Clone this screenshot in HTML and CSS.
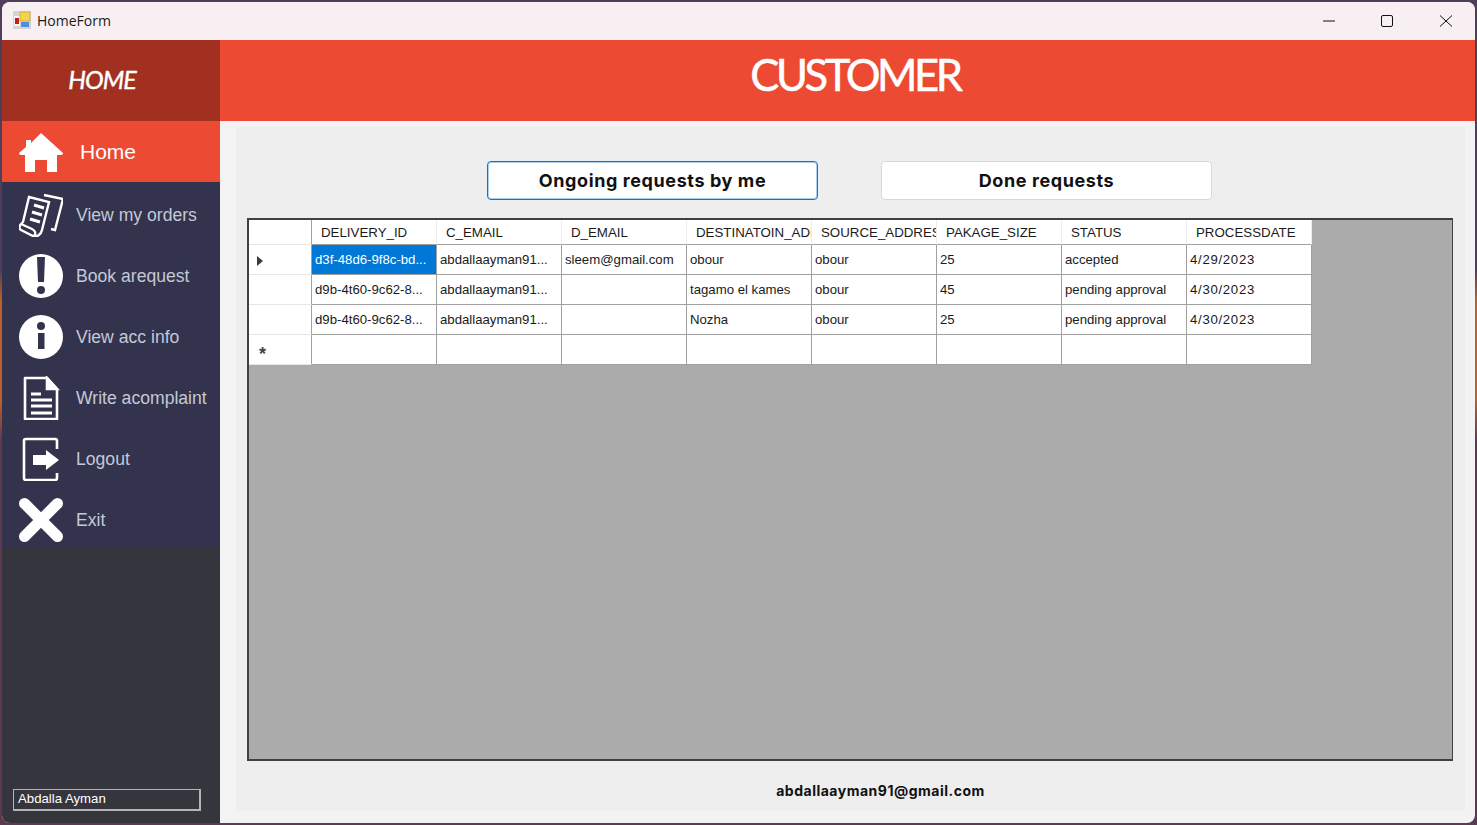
FILE: index.html
```html
<!DOCTYPE html>
<html lang="en">
<head>
    <meta charset="UTF-8">
    <title>HomeForm</title>
    <link rel="stylesheet" href="styles.css">
</head>
<body>
    <div class="window">
        <div class="titlebar">
            <svg class="app-icon" viewBox="0 0 18 18">
                <rect width="18" height="18" fill="#d4d4d4"/>
                <rect x="1" y="5" width="6" height="10" fill="#f2f2f2"/>
                <rect x="2" y="7" width="4" height="6" fill="#b8231c"/>
                <rect x="7" y="1" width="10" height="9" fill="#f6d24a" stroke="#b89a2a" stroke-width="0.6"/>
                <rect x="8" y="11" width="8" height="5" fill="#4f8fe0"/>
            </svg>
            <span class="title-text">HomeForm</span>
            <div class="win-controls">
                <div class="win-btn">
                    <svg viewBox="0 0 14 14" width="14" height="14"><path d="M1 7H13" stroke="#111" stroke-width="1" fill="none"/></svg>
                </div>
                <div class="win-btn">
                    <svg viewBox="0 0 14 14" width="14" height="14"><rect x="1.5" y="1.5" width="11" height="11" rx="1.5" stroke="#111" stroke-width="1" fill="none"/></svg>
                </div>
                <div class="win-btn">
                    <svg viewBox="0 0 14 14" width="14" height="14"><path d="M1 1.5L13 12.5M13 1.5L1 12.5" stroke="#111" stroke-width="1" fill="none"/></svg>
                </div>
            </div>
        </div>

        <div class="main">
            <div class="sidebar">
                <div class="logo"><span>HOME</span></div>
                <div class="menu">
                    <div class="menu-item active">
                        <svg class="menu-icon" viewBox="0 0 44 44"><path fill="#fff" d="M22 2L44 22Q44 24 42 24H38V41H28V29H16V41H6V24H2Q0 24 0 22L7 16V9H12V12Z"/></svg>
                        <span>Home</span>
                    </div>
                    <div class="menu-item">
                        <svg class="menu-icon" viewBox="0 0 44 44" fill="none" stroke="#fff" stroke-width="2.4">
                            <path d="M25 2L44 6L36 37L32 36"/>
                            <path d="M10 4L30 9L23 37C22 42 18 44 14 43L2 37C0 36 0 33 2 31L4 29Z"/>
                            <path d="M2 31L13 36C17 38 17 41 15 43"/>
                            <path stroke-width="3" d="M15 12L25 15M13 19L23 22M11 26L21 29"/>
                        </svg>
                        <span>View my orders</span>
                    </div>
                    <div class="menu-item">
                        <svg class="menu-icon" viewBox="0 0 44 44">
                            <circle cx="22" cy="22" r="22" fill="#fff"/>
                            <path fill="#33334d" d="M18 3H26L25 28H19Z"/>
                            <circle cx="22" cy="36" r="4" fill="#33334d"/>
                        </svg>
                        <span>Book arequest</span>
                    </div>
                    <div class="menu-item">
                        <svg class="menu-icon" viewBox="0 0 44 44">
                            <circle cx="22" cy="22" r="22" fill="#fff"/>
                            <circle cx="22" cy="11" r="4" fill="#33334d"/>
                            <rect x="19" y="18" width="6.5" height="16" fill="#33334d"/>
                        </svg>
                        <span>View acc info</span>
                    </div>
                    <div class="menu-item">
                        <svg class="menu-icon" viewBox="0 0 44 44" fill="none" stroke="#fff" stroke-width="2.6">
                            <path d="M6 2H28L38 13V43H6Z" stroke-linejoin="round"/>
                            <path fill="#fff" d="M28 2V13H38Z"/>
                            <path stroke-width="3" d="M12 18H22M12 24H33M12 30H33M12 37H33"/>
                        </svg>
                        <span>Write acomplaint</span>
                    </div>
                    <div class="menu-item">
                        <svg class="menu-icon" viewBox="0 0 44 44">
                            <path fill="none" stroke="#fff" stroke-width="2.6" d="M38 12V4Q38 2 36 2H7Q5 2 5 4V41Q5 43 7 43H36Q38 43 38 41V36"/>
                            <path fill="#fff" d="M14 18H27V13L40 23L27 33V28H14Z"/>
                        </svg>
                        <span>Logout</span>
                    </div>
                    <div class="menu-item">
                        <svg class="menu-icon" viewBox="0 0 44 44"><path stroke="#fff" stroke-width="11" stroke-linecap="round" d="M5.5 5.5L38.5 38.5M38.5 5.5L5.5 38.5"/></svg>
                        <span>Exit</span>
                    </div>
                </div>
                <div class="user-box">
                    <div class="user-name">Abdalla Ayman</div>
                </div>
            </div>

            <div class="right">
                <div class="header">CUSTOMER</div>
                <div class="content">
                    <div class="panel">
                        <div class="btn-row">
                            <div class="btn focused">Ongoing requests by me</div>
                            <div class="btn">Done requests</div>
                        </div>
                        <div class="grid-box">
                            <table class="grid">
                                <colgroup>
                                    <col class="col-head">
                                    <col class="col-data"><col class="col-data"><col class="col-data"><col class="col-data">
                                    <col class="col-data"><col class="col-data"><col class="col-data"><col class="col-data">
                                </colgroup>
                                <thead>
                                    <tr>
                                        <th class="row-head"></th>
                                        <th>DELIVERY_ID</th>
                                        <th>C_EMAIL</th>
                                        <th>D_EMAIL</th>
                                        <th>DESTINATOIN_ADDRESS</th>
                                        <th>SOURCE_ADDRESS</th>
                                        <th>PAKAGE_SIZE</th>
                                        <th>STATUS</th>
                                        <th>PROCESSDATE</th>
                                    </tr>
                                </thead>
                                <tbody>
                                    <tr>
                                        <td class="row-head"><span class="arrow"></span></td>
                                        <td class="selected">d3f-48d6-9f8c-bd...</td>
                                        <td>abdallaayman91...</td>
                                        <td>sleem@gmail.com</td>
                                        <td>obour</td>
                                        <td>obour</td>
                                        <td>25</td>
                                        <td>accepted</td>
                                        <td class="date">4/29/2023</td>
                                    </tr>
                                    <tr>
                                        <td class="row-head"></td>
                                        <td>d9b-4t60-9c62-8...</td>
                                        <td>abdallaayman91...</td>
                                        <td></td>
                                        <td>tagamo el kames</td>
                                        <td>obour</td>
                                        <td>45</td>
                                        <td>pending approval</td>
                                        <td class="date">4/30/2023</td>
                                    </tr>
                                    <tr>
                                        <td class="row-head"></td>
                                        <td>d9b-4t60-9c62-8...</td>
                                        <td>abdallaayman91...</td>
                                        <td></td>
                                        <td>Nozha</td>
                                        <td>obour</td>
                                        <td>25</td>
                                        <td>pending approval</td>
                                        <td class="date">4/30/2023</td>
                                    </tr>
                                    <tr>
                                        <td class="row-head"><span class="star">*</span></td>
                                        <td></td><td></td><td></td><td></td><td></td><td></td><td></td><td></td>
                                    </tr>
                                </tbody>
                            </table>
                        </div>
                        <div class="email">abdallaayman91@gmail.com</div>
                    </div>
                </div>
            </div>
        </div>
    </div>
</body>
</html>
```

FILE: styles.css
```css
* {
    box-sizing: border-box;
}
html, body {
    margin: 0;
    height: 100%;
    overflow: hidden;
}
body {
    padding: 2px;
    background: linear-gradient(to bottom, #4f3d5a 0, #4f3d5a 270px, #b8622c 300px, #b8622c 400px, #5e3a52 440px, #5e3a52 100%);
}
.window {
    height: 821px;
    display: flex;
    flex-direction: column;
    border-radius: 8px;
    overflow: hidden;
    background: #f3f3f3;
}

/* title bar */
.titlebar {
    height: 38px;
    flex: none;
    display: flex;
    align-items: center;
    padding-left: 11px;
    background: #f8eff3;
}
.app-icon {
    width: 18px;
    height: 18px;
    margin-bottom: 2px;
}
.title-text {
    margin: 0 0 2px 6px;
    font-family: "Open Sans", sans-serif;
    font-size: 14px;
    color: #1a1a1a;
}
.win-controls {
    margin-left: auto;
    display: flex;
}
.win-btn {
    width: 58.5px;
    height: 38px;
    display: flex;
    align-items: center;
    justify-content: center;
}

.main {
    flex: 1;
    display: flex;
    min-height: 0;
}

/* sidebar */
.sidebar {
    width: 218px;
    flex: none;
    display: flex;
    flex-direction: column;
    background: #35353d;
}
.logo {
    height: 81px;
    flex: none;
    display: flex;
    align-items: center;
    justify-content: center;
    padding: 0 18px 3px 0;
    background: #a23020;
    font-family: Lato, sans-serif;
    font-style: italic;
    font-size: 25px;
    letter-spacing: -1px;
    -webkit-text-stroke: 0.4px #fff;
    color: #fff;
}
.menu {
    flex: none;
    background: #33334d;
}
.menu-item {
    height: 61px;
    display: flex;
    align-items: center;
    padding: 5px 0 0 17px;
    font-family: "Liberation Sans", Arial, sans-serif;
    font-size: 17.6px;
    color: #c3c9d6;
}
.menu-icon {
    width: 44px;
    height: 44px;
    flex: none;
    margin-right: 13px;
}
.menu-item.active {
    padding-top: 1px;
    background: #ec4a33;
    color: #fff;
    font-size: 21px;
}
.menu-item.active .menu-icon {
    margin: 2px 17px 0 0;
}
.user-box {
    margin-top: auto;
    padding: 0 19px 12px 11px;
}
.user-name {
    height: 22px;
    padding-left: 4px;
    line-height: 18px;
    border: 2px solid #b4b4b4;
    border-width: 1px 2px 2px 1px;
    font-family: "Liberation Sans", Arial, sans-serif;
    font-size: 13.2px;
    color: #fff;
}

/* right side */
.right {
    flex: 1;
    display: flex;
    flex-direction: column;
    min-width: 0;
}
.header {
    height: 81px;
    flex: none;
    padding: 0 0 14px 15px;
    display: flex;
    align-items: center;
    justify-content: center;
    background: #ec4a33;
    font-family: Lato, sans-serif;
    font-size: 43.5px;
    letter-spacing: -3.4px;
    -webkit-text-stroke: 0.5px #fff;
    color: #fff;
}
.content {
    flex: 1;
    padding: 6px 10px 12px 16px;
    min-height: 0;
}
.panel {
    height: 100%;
    padding: 34px 12px 0 11px;
    background: #eeeeee;
}
.btn-row {
    display: flex;
    gap: 63px;
    padding-left: 240px;
    margin-bottom: 18px;
}
.btn {
    width: 331px;
    height: 39px;
    display: flex;
    align-items: center;
    justify-content: center;
    background: #fff;
    border: 1px solid #d8d8d8;
    border-radius: 4px;
    font-family: Inter, sans-serif;
    font-weight: 700;
    font-size: 18px;
    letter-spacing: 0.6px;
    color: #111;
}
.btn.focused {
    border: 1px solid #1f6fc0;
    box-shadow: inset 0 0 0 1px #a9d0f0;
}

/* data grid */
.grid-box {
    width: 1206px;
    height: 543px;
    background: #ababab;
    border: 2px solid #404040;
    border-right-width: 1px;
}
.grid {
    border-collapse: separate;
    border-spacing: 0;
    table-layout: fixed;
    width: 1063px;
    font-family: "Liberation Sans", Arial, sans-serif;
    font-size: 13.2px;
    color: #1a1a1a;
}
.col-head {
    width: 63px;
}
.col-data {
    width: 125px;
}
.grid th, .grid td {
    background: #fff;
    overflow: hidden;
    white-space: nowrap;
    text-align: left;
    font-weight: normal;
}
.grid th {
    height: 25px;
    padding: 0 0 0 9px;
    border-right: 1px solid #ececec;
    border-bottom: 1px solid #a0a0a0;
    font-size: 13.3px;
}
.grid td {
    height: 30px;
    padding: 0 0 0 3px;
    border-right: 1px solid #a0a0a0;
    border-bottom: 1px solid #a0a0a0;
}
.grid .row-head {
    padding: 0;
    border-right: 1px solid #a0a0a0;
    border-bottom: 1px solid #e6e6e6;
}
.grid td.selected {
    background: #0078d7;
    color: #fff;
}
.grid td.date {
    letter-spacing: 0.7px;
}
.arrow {
    display: block;
    width: 0;
    height: 0;
    margin: 2px 0 0 8px;
    border-left: 6px solid #3c3c3c;
    border-top: 5.5px solid transparent;
    border-bottom: 5.5px solid transparent;
}
.star {
    display: block;
    padding: 8px 0 0 10px;
    font-size: 18px;
    font-weight: bold;
    line-height: 18px;
    color: #444;
}
.email {
    padding: 21px 0 0 61px;
    text-align: center;
    font-family: Inter, sans-serif;
    font-weight: 700;
    font-size: 14px;
    letter-spacing: 0.5px;
    color: #111;
}
```
